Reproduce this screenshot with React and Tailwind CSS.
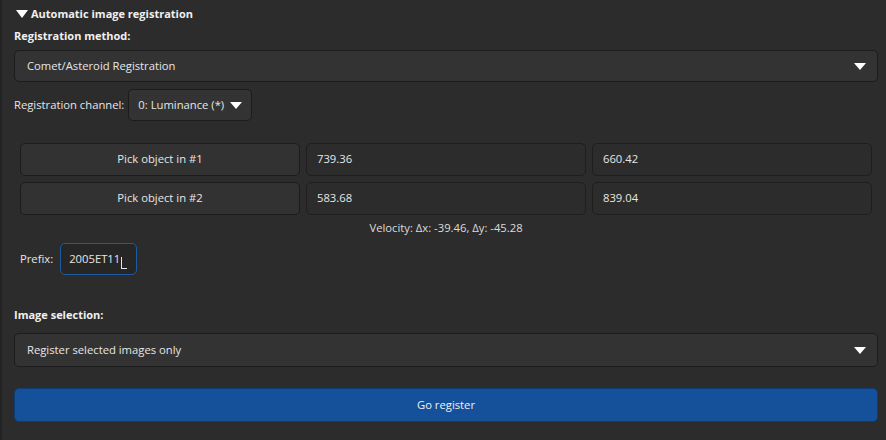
const font = { fontFamily: '"Open Sans", "Noto Sans", sans-serif' };

function Caret({ className = "" }) {
  return (
    <svg width="12" height="7" viewBox="0 0 12 7" className={className}>
      <path d="M0 0 H12 L6 7 Z" fill="#ffffff" />
    </svg>
  );
}

function Combo({ text, className = "" }) {
  return (
    <div
      className={
        "flex items-center justify-between rounded-[5px] border border-[#1c1c1c] bg-[#333333] pl-[12px] pr-[11px] text-[11.25px] text-[#e6e6e6] " +
        className
      }
    >
      <span>{text}</span>
      <Caret />
    </div>
  );
}

function Field({ value }) {
  return (
    <div className="flex h-[33px] items-center rounded-[5px] border border-[#1e1e1e] bg-[#2c2c2c] px-[10px] text-[11.25px] text-[#e6e6e6]">
      {value}
    </div>
  );
}

function PickButton({ label }) {
  return (
    <div className="flex h-[33px] items-center justify-center rounded-[5px] border border-[#1c1c1c] bg-[#323232] text-[11.25px] text-[#e6e6e6]">
      {label}
    </div>
  );
}

export default function App() {
  return (
    <div className="h-[440px] w-[886px] overflow-hidden bg-[#2c2c2c]" style={font}>
      <div className="h-full border-l-[2px] border-[#232323] pl-[12px] pr-[8px]">
        <div className="flex h-[26px] items-center gap-[3px] pl-[2px] pt-[2px] text-[11px] font-bold text-[#f0f0f0]">
          <svg width="12" height="8" viewBox="0 0 12 8">
            <path d="M0 0 H12 L6 8 Z" fill="#ffffff" />
          </svg>
          <span>Automatic image registration</span>
        </div>
        <div className="flex h-[20px] items-center text-[11px] font-bold text-[#f0f0f0]">Registration method:</div>
        <Combo text="Comet/Asteroid Registration" className="mt-[4px] h-[32px]" />
        <div className="mt-[7px] flex h-[32px] items-center gap-[4px] text-[11.25px] text-[#e6e6e6]">
          <span>Registration channel:</span>
          <div className="flex h-[32px] items-center gap-[6px] rounded-[5px] border border-[#1c1c1c] bg-[#333333] pl-[9px] pr-[9px]">
            <span>0: Luminance (*)</span>
            <Caret />
          </div>
        </div>

        <div className="mt-[22px] grid grid-cols-3 gap-[6px] px-[6px]">
          <PickButton label="Pick object in #1" />
          <Field value="739.36" />
          <Field value="660.42" />
          <PickButton label="Pick object in #2" />
          <Field value="583.68" />
          <Field value="839.04" />
        </div>
        <div className="flex h-[27px] items-center justify-center text-[11.25px] text-[#dcdcdc]">
          Velocity: Δx: -39.46, Δy: -45.28
        </div>
        <div className="mt-[1px] flex items-center gap-[7px] pl-[6px] text-[11.25px] text-[#e6e6e6]">
          <span>Prefix:</span>
          <div className="flex h-[32px] w-[77px] items-center rounded-[5px] border border-[#1d5aa0] bg-[#262626] pl-[8px]">
            <span>2005ET11</span>
            <span className="ml-[1px] mt-[8px] h-[12px] w-[6px] border-b border-l border-[#e6e6e6]" />
          </div>
        </div>

        <div className="mt-[30px] flex h-[20px] items-center text-[11px] font-bold text-[#f0f0f0]">Image selection:</div>
        <Combo text="Register selected images only" className="mt-[8px] h-[34px]" />
        <div className="mt-[21px] flex h-[34px] items-center justify-center rounded-[5px] border border-[#103c74] bg-[#15519b] text-[11.25px] text-[#f0f0f0]">
          Go register
        </div>
      </div>
    </div>
  );
}
